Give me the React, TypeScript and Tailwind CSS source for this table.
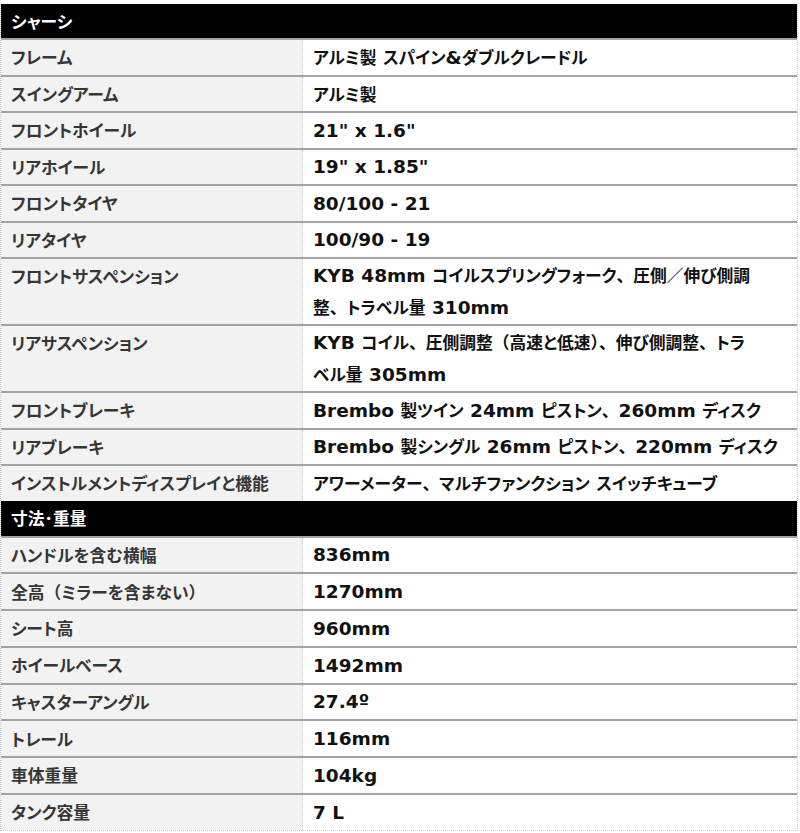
import React from "react";

// Spec sheet: two black section headers, label / value rows below each.
// Latin runs are set a little larger than the Japanese, the way Meiryo's
// Verdana-derived Latin glyphs sit next to its kana.

type Row = { label: string; value: string | string[] };
type Section = { title: string; rows: Row[] };

const SECTIONS: Section[] = [
  {
    title: "シャーシ",
    rows: [
      { label: "フレーム", value: "アルミ製 スパイン&ダブルクレードル" },
      { label: "スイングアーム", value: "アルミ製" },
      { label: "フロントホイール", value: '21" x 1.6"' },
      { label: "リアホイール", value: '19" x 1.85"' },
      { label: "フロントタイヤ", value: "80/100 - 21" },
      { label: "リアタイヤ", value: "100/90 - 19" },
      {
        label: "フロントサスペンション",
        value: ["KYB 48mm コイルスプリングフォーク、圧側／伸び側調", "整、トラベル量 310mm"],
      },
      {
        label: "リアサスペンション",
        value: ["KYB コイル、圧側調整（高速と低速）、伸び側調整、トラ", "ベル量 305mm"],
      },
      { label: "フロントブレーキ", value: "Brembo 製ツイン 24mm ピストン、260mm ディスク" },
      { label: "リアブレーキ", value: "Brembo 製シングル 26mm ピストン、220mm ディスク" },
      {
        label: "インストルメントディスプレイと機能",
        value: "アワーメーター、マルチファンクション スイッチキューブ",
      },
    ],
  },
  {
    title: "寸法･重量",
    rows: [
      { label: "ハンドルを含む横幅", value: "836mm" },
      { label: "全高（ミラーを含まない）", value: "1270mm" },
      { label: "シート高", value: "960mm" },
      { label: "ホイールベース", value: "1492mm" },
      { label: "キャスターアングル", value: "27.4º" },
      { label: "トレール", value: "116mm" },
      { label: "車体重量", value: "104kg" },
      { label: "タンク容量", value: "7 L" },
    ],
  },
];

const LATIN = /^[\x20-\x7e\u00ba]+$/;
const PUNCT = /^[（）、／]+$/;

function Mixed({ text }: { text: string }): React.ReactElement {
  // ASCII runs get the wider Latin face; kana are set proportionally (palt)
  // but full-width brackets and commas keep their full em.
  const parts = text.split(/([\x20-\x7e\u00ba]+|[（）、／]+)/).filter(Boolean);
  return (
    <span>
      {parts.map((part, i) => {
        if (LATIN.test(part)) {
          return (
            <span key={i} className="font-['DejaVu_Sans',sans-serif] text-[18.5px]">
              {part}
            </span>
          );
        }
        if (PUNCT.test(part)) {
          return (
            <span key={i} className="[font-feature-settings:normal]">
              {part}
            </span>
          );
        }
        return <span key={i}>{part}</span>;
      })}
    </span>
  );
}

function SpecRow({ row, tight }: { row: Row; tight: boolean }): React.ReactElement {
  const lines = Array.isArray(row.value) ? row.value : [row.value];
  // Single-line rows are 36.5px in the first block and a hair taller in the second.
  const single = tight ? "h-[34.5px]" : "h-[34.75px]";
  const height = lines.length > 1 ? "h-[65px]" : single;
  return (
    <div className="grid grid-cols-[302px_1fr] border-t-2 border-[#a3a3a3]">
      <div
        className={`border-r border-dotted border-[#c8c8c8] bg-[#f2f2f2] pl-[10px] text-[#363636] ${height}`}
      >
        <div className={`flex items-center ${single}`}>
          <Mixed text={row.label} />
        </div>
      </div>
      <div className={`flex flex-col pl-[10px] text-[#111] ${height}`}>
        {lines.map((line, i) => (
          <div
            key={i}
            className={`flex items-center whitespace-nowrap ${lines.length > 1 ? "h-[32.5px]" : single}`}
          >
            <Mixed text={line} />
          </div>
        ))}
      </div>
    </div>
  );
}

export default function App(): React.ReactElement {
  return (
    <div className="min-h-[833px] bg-white pt-1">
      <div className="w-[798px] border-x border-b border-dotted border-[#c8c8c8] font-['Noto_Sans_CJK_JP',sans-serif] text-[16.75px] leading-[24px] font-bold [font-feature-settings:'palt']">
        {SECTIONS.map((section, s) => (
          <section key={section.title}>
            <h2
              className={`flex items-center bg-black pl-[10px] text-white ${s === 0 ? "h-[34px]" : "h-[35px]"}`}
            >
              <Mixed text={section.title} />
            </h2>
            {section.rows.map((row) => (
              <SpecRow key={row.label} row={row} tight={s === 0} />
            ))}
          </section>
        ))}
      </div>
    </div>
  );
}
